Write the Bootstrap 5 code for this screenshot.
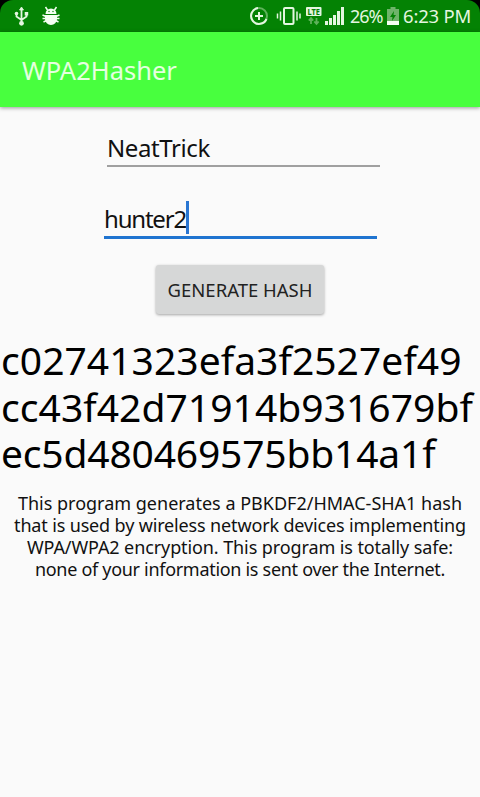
<!DOCTYPE html>
<html lang="en">
<head>
    <meta charset="UTF-8">
    <meta name="viewport" content="width=device-width, initial-scale=1.0">
    <title>WPA2Hasher</title>
    <link href="https://cdn.jsdelivr.net/npm/bootstrap@5.3.2/dist/css/bootstrap.min.css" rel="stylesheet">
    <style>
        body {
            background: #fafafa;
            color: #111;
            font-family: "Noto Sans", sans-serif;
            min-height: 797px;
            overflow: hidden;
        }
        .status-wrap {
            background: #000;
        }
        .status-bar {
            height: 32px;
            background: #048204;
            color: #e4f6e0;
            border-radius: 13px 13px 0 0;
            padding: 0 8px 0 14px;
            font-size: 18px;
            line-height: 32px;
        }
        .status-bar svg {
            display: block;
            flex: none;
        }
        .battery-text {
            width: 32px;
            letter-spacing: -1.1px;
        }
        .clock {
            width: 69px;
            font-size: 18.5px;
            letter-spacing: -.2px;
        }
        .app-bar {
            height: 75px;
            background: #48ff3e;
            box-shadow: 0 1px 4px rgba(0, 0, 0, .4);
            padding: 0 0 0 22px;
        }
        .app-title {
            color: #e6ffe0;
            font-size: 25.5px;
            line-height: 36px;
            letter-spacing: 0;
        }
        .field {
            width: 273px;
            padding: 0;
            border: 0;
            border-radius: 0;
            background: transparent;
            font-size: 24px;
            line-height: 32px;
            letter-spacing: -.4px;
        }
        .field-ssid {
            height: 35px;
            margin: 25px 0 0 107px;
            border-bottom: 2px solid #a0a0a0;
        }
        .field-pass {
            height: 38px;
            margin: 34px 0 0 104px;
            border-bottom: 3px solid #1f74d0;
            line-height: 35px;
            letter-spacing: -1.2px;
        }
        .caret {
            width: 3px;
            height: 33px;
            background: #2a76d2;
        }
        .btn-hash {
            width: 168px;
            height: 49px;
            margin-top: 26px;
            padding: 0;
            border: 0;
            border-radius: 3px;
            background: #d6d7d7;
            color: #222;
            box-shadow: 0 1px 3px rgba(0, 0, 0, .35);
            font-size: 18.5px;
            letter-spacing: 0;
        }
        .hash {
            margin-top: 23px;
            padding-left: 1px;
            color: #000;
            font-size: 39px;
            line-height: 46.6px;
            letter-spacing: .05px;
            white-space: nowrap;
        }
        .hash div:last-child {
            letter-spacing: -.18px;
        }
        .about {
            margin-top: 15px;
            font-size: 18px;
            line-height: 22px;
            white-space: nowrap;
        }
        .about div:nth-child(2) {
            letter-spacing: -.15px;
        }
        .about div:nth-child(3) {
            letter-spacing: -.1px;
        }
        .about div:nth-child(4) {
            letter-spacing: -.3px;
        }
    </style>
</head>
<body>
    <div class="status-wrap">
        <div class="status-bar d-flex align-items-center">
            <!-- usb -->
            <svg width="16" height="32" viewBox="0 0 16 32" fill="#e4f6e0" stroke="#e4f6e0" stroke-width="1.8">
                <path d="M7.500 10V23M2.500 13.500V16.500L7.500 20M12.500 13.500V16.500L7.500 20" fill="none"/>
                <path d="M7.500 7L5.500 10H9.500Z" stroke-width=".8"/>
                <circle cx="2.500" cy="13.500" r="1.800" stroke="none"/>
                <rect x="10.700" y="12" width="3.500" height="3.500" stroke="none"/>
                <circle cx="7.500" cy="23.300" r="2.400" stroke="none"/>
            </svg>
            <!-- android debugging -->
            <svg style="margin-left:11px" width="20" height="32" viewBox="0 0 20 32" fill="#f4fff2">
                <path d="M4.500 14a5.500 5.500 0 0 1 11 0zM4 15h12v4a6 6 0 0 1-12 0z"/>
                <path d="M6.500 10L4.500 7M13.500 10L15.500 7M5 16.500L1.500 15M15 16.500L18.500 15M5 18.500H1.500M15 18.500H18.500M5.500 20.500L2.500 22M14.500 20.500L17.500 22" stroke="#f4fff2" stroke-width="1.500"/>
                <circle cx="8" cy="11.500" r=".7" fill="#048204"/>
                <circle cx="12" cy="11.500" r=".7" fill="#048204"/>
            </svg>
            <!-- data saver -->
            <svg class="ms-auto" width="20" height="32" viewBox="0 0 20 32" fill="none" stroke="#e4f6e0" stroke-width="2">
                <circle cx="10" cy="16" r="8" stroke="#5fb25b"/>
                <path d="M9 8A8 8 0 1 0 17.500 19M10 12v8M6 16h8"/>
            </svg>
            <!-- vibrate -->
            <svg style="margin-left:7px" width="25" height="32" viewBox="0 0 25 32" fill="none" stroke="#e4f6e0" stroke-width="2">
                <rect x="8" y="8" width="9.500" height="16" rx="1"/>
                <path d="M4.500 11.500v9M1.500 13.500v5M21 11.500v9M24 13.500v5" stroke-width="1.500"/>
            </svg>
            <!-- lte -->
            <svg style="margin-left:5px" width="16" height="32" viewBox="0 0 16 32">
                <rect x="0" y="7" width="15.500" height="9" rx="1" fill="#e4f6e0"/>
                <text x="1.500" y="14.700" font-family="Noto Sans, sans-serif" font-size="8.500" font-weight="700" textLength="12.500" lengthAdjust="spacingAndGlyphs" fill="#048204">LTE</text>
                <path d="M5 24v-6M2.800 20.500L5 18l2.200 2.500M10.500 18v6M8.300 21.500l2.200 2.500l2.200-2.500" fill="none" stroke="#5fb25b" stroke-width="1.800"/>
            </svg>
            <!-- signal -->
            <svg style="margin-left:3px" width="20" height="32" viewBox="0 0 20 32" fill="#e4f6e0">
                <path d="M0 21h3v4H0zM4 18h3v7H4zM8 15h3v10H8zM12 11h3v14h-3zM16 7h3v18h-3z"/>
            </svg>
            <span class="battery-text text-nowrap" style="margin-left:5px">26%</span>
            <!-- battery -->
            <svg style="margin-left:5px" width="12" height="32" viewBox="0 0 12 32">
                <path d="M3.500 7h5v2h3.500v16H0V9h3.500z" fill="#6fb46a"/>
                <path d="M7 11L3 17h2.500L5 21l4-6H6.500z" fill="#048204"/>
                <path d="M0 21h12v4H0z" fill="#f4fff2"/>
            </svg>
            <span class="clock text-nowrap" style="margin-left:4px">6:23 PM</span>
        </div>
    </div>

    <nav class="app-bar navbar">
        <span class="app-title">WPA2Hasher</span>
    </nav>

    <main>
        <div class="field field-ssid">NeatTrick</div>
        <div class="field field-pass d-flex"><span>hunter2</span><span class="caret"></span></div>
        <button type="button" class="btn btn-hash d-block mx-auto">GENERATE HASH</button>
        <div class="hash">
            <div>c02741323efa3f2527ef49</div>
            <div>cc43f42d71914b931679bf</div>
            <div>ec5d480469575bb14a1f</div>
        </div>
        <div class="about text-center">
            <div>This program generates a PBKDF2/HMAC-SHA1 hash</div>
            <div>that is used by wireless network devices implementing</div>
            <div>WPA/WPA2 encryption. This program is totally safe:</div>
            <div>none of your information is sent over the Internet.</div>
        </div>
    </main>

    <script src="https://cdn.jsdelivr.net/npm/bootstrap@5.3.2/dist/js/bootstrap.bundle.min.js"></script>
</body>
</html>
